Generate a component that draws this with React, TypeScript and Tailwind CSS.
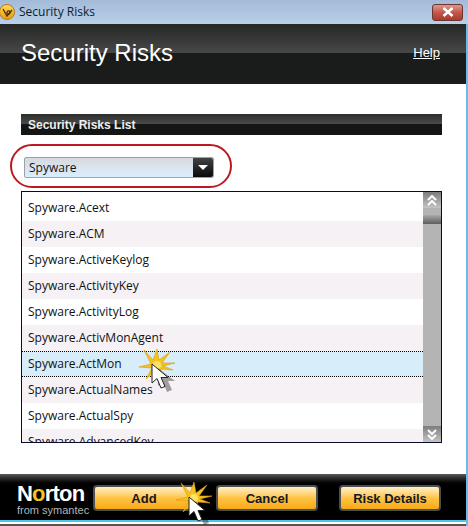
import React from 'react';

const risks = [
    'Spyware.Acext',
    'Spyware.ACM',
    'Spyware.ActiveKeylog',
    'Spyware.ActivityKey',
    'Spyware.ActivityLog',
    'Spyware.ActivMonAgent',
    'Spyware.ActMon',
    'Spyware.ActualNames',
    'Spyware.ActualSpy',
    'Spyware.AdvancedKey',
];

function Burst() {
    return (
        <svg width="38" height="36" viewBox="0 0 38 36">
            <polygon
                points="5,1 14,11 18,0 20,11 31,3 23,14 36,14 24,17 34,21 22,20 20,32 17,21 7,30 13,19 0,18 12,15"
                fill="#f6c21c"
                stroke="#d99a0c"
                strokeWidth="0.6"
            />
            <circle cx="18" cy="16" r="4" fill="#fbe36a" />
        </svg>
    );
}

function Cursor() {
    return (
        <svg width="26" height="30" viewBox="0 0 26 30">
            <path d="M5 4 L5 22 L10 18 L14 28 L19 26 L15 17 L22 17 Z" fill="#000" opacity="0.35" transform="translate(3 1)" />
            <path d="M2 1 L2 20 L7 15.5 L11 25 L15 23.5 L11 14.5 L18 14.5 Z" fill="#fff" stroke="#222" strokeWidth="1" />
        </svg>
    );
}

function ClickMark({className}: {className: string}) {
    return (
        <div className={`absolute ${className}`}>
            <Burst />
            <div className="absolute left-[11px] top-[14px]">
                <Cursor />
            </div>
        </div>
    );
}

function FooterButton({label, className}: {label: string; className: string}) {
    return (
        <button
            className={`h-[26px] w-[102px] rounded-[4px] border-2 border-[#4a4f52] bg-gradient-to-b from-[#fff0c4] via-[#ffc442] to-[#f9a90f] text-[13px] leading-none font-bold text-[#101828] ${className}`}
        >
            {label}
        </button>
    );
}

function ScrollButton({up}: {up: boolean}) {
    return (
        <div className="flex h-[16px] flex-col items-center justify-center bg-gradient-to-b from-[#7d7d7d] to-[#c4c4c4]">
            <svg width="10" height="11" viewBox="0 0 10 11" fill="none" stroke="#fff" strokeWidth="2">
                {up ? (
                    <path d="M1 5 L5 1 L9 5 M1 10 L5 6 L9 10" />
                ) : (
                    <path d="M1 1 L5 5 L9 1 M1 6 L5 10 L9 6" />
                )}
            </svg>
        </div>
    );
}

export default function App() {
    return (
        <div className="relative flex h-[526px] w-[468px] flex-col overflow-hidden bg-white font-['Liberation_Sans',sans-serif]">
            <div className="flex h-[24px] shrink-0 items-center bg-gradient-to-b from-[#a3bbd8] to-[#b9d0ea] pr-[5px]">
                <div className="ml-[-1px] flex h-[16px] w-[16px] items-center justify-center rounded-full border border-[#b87f08] bg-gradient-to-b from-[#ffd75a] to-[#e89c10]">
                    <svg width="11" height="11" viewBox="0 0 11 11" fill="none" stroke="#4a3204" strokeWidth="1.3">
                        <path d="M1 2 L5 9 L10 3" />
                        <circle cx="6.5" cy="5.5" r="1.6" />
                    </svg>
                </div>
                <span className="ml-[4px] font-['Open_Sans',sans-serif] text-[12px] text-[#0f1c2b]">Security Risks</span>
                <div className="ml-auto flex h-[17px] w-[31px] items-center justify-center rounded-[3px] border border-[#6b3530] bg-gradient-to-b from-[#dc9a90] via-[#c4574a] to-[#a93a2e]">
                    <svg width="14" height="10" viewBox="0 0 14 10" stroke="#fff" strokeWidth="2.6">
                        <path d="M2.5 1 L11.5 9 M11.5 1 L2.5 9" />
                    </svg>
                </div>
            </div>

            <div className="flex min-h-0 flex-1 flex-col border-r-2 border-[#6fb9e6]">
                <div className="relative flex h-[60px] shrink-0 items-center justify-between bg-[#191c1a] pr-[26px] pl-[21px]">
                    <div className="absolute inset-x-0 top-0 h-[29px] bg-gradient-to-b from-[#262826] to-[#474847]" />
                    <h1 className="relative mb-[2px] text-[24px] leading-none text-white">Security Risks</h1>
                    <a className="relative mb-[3px] text-[13px] text-white underline">Help</a>
                </div>

                <div className="flex min-h-0 flex-1 flex-col bg-white px-[21px] pt-[30px]">
                    <div className="relative flex h-[21px] w-[421px] shrink-0 items-center bg-[#141614] pl-[7px]">
                        <div className="absolute inset-x-0 top-0 h-[10px] bg-gradient-to-b from-[#2c2e2c] to-[#4a4b4a]" />
                        <span className="relative text-[12px] font-bold text-[#eeeeee]">Security Risks List</span>
                    </div>

                    <div className="mt-[22px] ml-[3px] flex h-[21px] w-[190px] shrink-0 rounded-[2px] border border-[#9aa3ab] bg-gradient-to-b from-[#d5d9de] via-[#dbe4ec] to-[#d8eefe]">
                        <span className="flex-1 pl-[4px] font-['Open_Sans',sans-serif] text-[12px] leading-[19px] text-[#111]">Spyware</span>
                        <div className="flex w-[20px] items-center justify-center rounded-r-[2px] bg-gradient-to-b from-[#444] to-[#0a0a0a]">
                            <div className="h-0 w-0 border-x-[5px] border-t-[5px] border-x-transparent border-t-white" />
                        </div>
                    </div>

                    <div className="mt-[13px] flex h-[252px] w-[421px] shrink-0 overflow-hidden border border-[#0a0a2a]">
                        <div className="min-w-0 flex-1 overflow-hidden pt-[3px]">
                            {risks.map((risk, i) => (
                                <div
                                    key={risk}
                                    className={`h-[26px] pl-[6px] font-['Open_Sans',sans-serif] text-[12px] text-[#111] ${
                                        i === 6
                                            ? 'border-y border-dotted border-black bg-[#d7edf9] leading-[24px]'
                                            : i % 2 === 1
                                              ? 'bg-[#f6f1f5] leading-[26px]'
                                              : 'bg-white leading-[26px]'
                                    }`}
                                >
                                    {risk}
                                </div>
                            ))}
                        </div>
                        <div className="flex w-[18px] shrink-0 flex-col bg-[#b4b4b4]">
                            <ScrollButton up />
                            <div className="mt-[7px] h-[9px] bg-gradient-to-b from-[#aaaaaa] to-[#5e5e5e]" />
                            <div className="flex-1" />
                            <ScrollButton up={false} />
                        </div>
                    </div>
                </div>

                <div className="flex h-[46px] shrink-0 flex-col bg-black">
                    <div className="flex flex-1 items-start bg-gradient-to-b from-[#5a5a5a] via-black via-[25%] to-black pt-[11px]">
                        <div className="ml-[17px] w-[71px] shrink-0 whitespace-nowrap text-white">
                            <div className="text-[22px] leading-[17px] font-bold tracking-[-0.8px]">
                                N<span className="text-[#f5c518]">o</span>rton
                            </div>
                            <div className="mt-[3px] text-[11px] leading-[11px] text-[#b5b5b5]">from symantec</div>
                        </div>
                        <FooterButton label="Add" className="ml-[5px]" />
                        <FooterButton label="Cancel" className="ml-[21px]" />
                        <FooterButton label="Risk Details" className="ml-[21px]" />
                    </div>
                </div>
                <div className="h-[2px] shrink-0 bg-[#4fc3e8]" />
                <div className="h-[2px] shrink-0 bg-white" />
                <div className="h-[2px] shrink-0 bg-[#555]" />
            </div>

            <div className="absolute top-[144px] left-[10px] h-[44px] w-[222px] rounded-[22px] border-2 border-[#bd1822]" />
            <ClickMark className="top-[349px] left-[139px]" />
            <ClickMark className="top-[482px] left-[176px]" />
        </div>
    );
}
